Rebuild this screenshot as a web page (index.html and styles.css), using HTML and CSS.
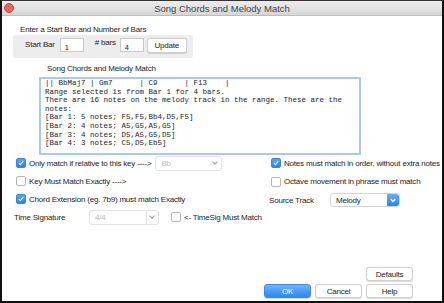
FILE: index.html
```html
<!DOCTYPE html>
<html lang="en">
<head>
    <meta charset="UTF-8">
    <title>Song Chords and Melody Match</title>
    <link rel="stylesheet" href="styles.css">
</head>
<body>

<div class="window">
    <!-- Title bar -->
    <div class="titlebar">
        <span class="close-dot"></span>
        <span class="title">Song Chords and Melody Match</span>
    </div>

    <div class="content">
        <!-- Start bar / number of bars -->
        <div class="bars-caption">Enter a Start Bar and Number of Bars</div>
        <div class="bars-group">
            <span class="lbl">Start Bar</span>
            <span class="field start-field">1</span>
            <span class="lbl bars-lbl"># bars</span>
            <span class="field bars-field">4</span>
            <button class="btn update-btn">Update</button>
        </div>

        <!-- Result memo -->
        <div class="memo-caption">Song Chords and Melody Match</div>
        <div class="memo">|| BbMaj7 | Gm7      | C9      | F13    |
Range selected is from Bar 1 for 4 bars.
There are 16 notes on the melody track in the range. These are the
notes:
[Bar 1: 5 notes; F5,F5,Bb4,D5,F5]
[Bar 2: 4 notes; A5,G5,A5,G5]
[Bar 3: 4 notes; D5,A5,G5,D5]
[Bar 4: 3 notes; C5,D5,Eb5]</div>

        <!-- Options -->
        <div class="options">
            <div class="col-left">
                <div class="row">
                    <span class="check on"><svg viewBox="0 0 10 10"><path d="M2.3 5.2 L4.2 7.2 L7.8 2.6" /></svg></span>
                    <span class="txt">Only match if relative to this key ----&gt;</span>
                    <span class="select disabled key-select"><span>Bb</span><i class="chev"></i></span>
                </div>
                <div class="row">
                    <span class="check"></span>
                    <span class="txt">Key Must Match Exactly ----&gt;</span>
                </div>
                <div class="row">
                    <span class="check on"><svg viewBox="0 0 10 10"><path d="M2.3 5.2 L4.2 7.2 L7.8 2.6" /></svg></span>
                    <span class="txt">Chord Extension (eg. 7b9) must match Exactly</span>
                </div>
                <div class="row">
                    <span class="txt time-lbl">Time Signature</span>
                    <span class="select disabled time-select"><span>4/4</span><i class="sep"></i><i class="chev"></i></span>
                    <span class="check"></span>
                    <span class="txt">&lt;- TimeSig Must Match</span>
                </div>
            </div>
            <div class="col-right">
                <div class="row indent">
                    <span class="check on"><svg viewBox="0 0 10 10"><path d="M2.3 5.2 L4.2 7.2 L7.8 2.6" /></svg></span>
                    <span class="txt">Notes must match in order, without extra notes</span>
                </div>
                <div class="row indent row-octave">
                    <span class="check"></span>
                    <span class="txt">Octave movement in phrase must match</span>
                </div>
                <div class="row">
                    <span class="txt source-lbl">Source Track</span>
                    <span class="select source-select"><span>Melody</span><i class="blue-btn"><svg viewBox="0 0 10 10"><path d="M3 4.2 L5 6.2 L7 4.2" /></svg></i></span>
                </div>
            </div>
        </div>

        <!-- Buttons -->
        <div class="footer">
            <div class="footer-row">
                <button class="btn">Defaults</button>
            </div>
            <div class="footer-row">
                <button class="btn ok-btn">OK</button>
                <button class="btn">Cancel</button>
                <button class="btn">Help</button>
            </div>
        </div>
    </div>
</div>

</body>
</html>
```

FILE: styles.css
```css
/* Общие */
html, body {
    margin: 0;
    padding: 0;
    background: #fff;
}

.window {
    width: 444px;
    height: 303px;
    box-sizing: border-box;
    border: 2px solid #111;
    border-top: 1px solid #333;
    font-family: "Liberation Sans", Arial, sans-serif;
    font-size: 8px;
    letter-spacing: -0.2px;
    color: #222;
    background: #fff;
    overflow: hidden;
    display: flex;
    flex-direction: column;
}

/* Заголовок окна */
.titlebar {
    position: relative;
    height: 14px;
    flex: none;
    background: linear-gradient(#ececec, #d6d6d6);
    border-bottom: 1px solid #bdbdbd;
    display: flex;
    align-items: center;
    justify-content: center;
}

.close-dot {
    position: absolute;
    left: 2px;
    top: 2px;
    width: 10px;
    height: 10px;
    border-radius: 50%;
    background: #f0605a;
    border: 0.5px solid #d8453f;
    box-sizing: border-box;
}

.title {
    font-size: 9.5px;
    letter-spacing: 0;
    color: #444;
}

.content {
    flex: 1;
    display: flex;
    flex-direction: column;
}

/* Начальный такт */
.bars-caption {
    margin: 9px 0 0 18px;
    line-height: 10px;
}

.bars-group {
    margin: 0 0 0 11px;
    width: 180px;
    height: 23px;
    box-sizing: border-box;
    background: #ededed;
    border-radius: 3px;
    display: flex;
    align-items: flex-start;
    padding: 3px 0 0 12px;
}

.lbl {
    line-height: 10px;
    margin-top: 2px;
}

.field {
    width: 24px;
    height: 14px;
    box-sizing: border-box;
    background: #fff;
    border: 1px solid #c8c8c8;
    padding: 4px 0 0 4px;
    font-size: 7.5px;
    line-height: 9px;
}

.start-field {
    margin-left: 5px;
}

.bars-lbl {
    margin-left: 11px;
    margin-top: 0;
}

.bars-field {
    margin-left: 4px;
}

.btn {
    height: 14px;
    width: 47px;
    padding: 0;
    font-family: "Liberation Sans", Arial, sans-serif;
    font-size: 8px;
    letter-spacing: -0.2px;
    color: #222;
    background: #fff;
    border: 1px solid #cfcfcf;
    border-radius: 3px;
    box-shadow: 0 0.5px 1px rgba(0,0,0,0.15);
}

.update-btn {
    width: 40px;
    height: 15px;
    margin-left: 3px;
}

/* Окно результата */
.memo-caption {
    margin: 6px 0 0 45px;
    line-height: 10px;
}

.memo {
    margin: 3px 0 0 37px;
    width: 322px;
    height: 78px;
    box-sizing: border-box;
    border: 2px solid #a9c9f0;
    border-radius: 1px;
    padding: 0 0 0 4px;
    font-family: "Liberation Mono", "Courier New", monospace;
    font-size: 7.5px;
    letter-spacing: 0;
    line-height: 8.6px;
    white-space: pre;
    color: #222;
}

/* Опции */
.options {
    display: flex;
    margin-top: -1px;
}

.col-left {
    width: 267px;
    padding-left: 14px;
    box-sizing: border-box;
    flex: none;
}

.row {
    display: flex;
    align-items: center;
    height: 18px;
    white-space: nowrap;
}

.row-octave {
    height: 19px;
}

.indent {
    margin-left: 2px;
}

.check {
    width: 10px;
    height: 10px;
    box-sizing: border-box;
    border: 1px solid #b4b4b4;
    border-radius: 2px;
    background: #fff;
    margin-right: 3px;
    flex: none;
    display: flex;
    align-items: center;
    justify-content: center;
}

.check.on {
    background: linear-gradient(#5aa6f8, #2b7ff0);
    border-color: #3a84e6;
}

.check svg {
    width: 8px;
    height: 8px;
}

.check path {
    fill: none;
    stroke: #fff;
    stroke-width: 1.4;
}

.select {
    display: flex;
    align-items: center;
    height: 15px;
    box-sizing: border-box;
    border: 1px solid #d4d4d4;
    border-radius: 3px;
    background: #fff;
    padding-left: 5px;
    flex: none;
}

.select > span {
    flex: 1;
}

.select.disabled {
    color: #b8b8b8;
    border-color: #e2e2e2;
}

.chev {
    width: 3px;
    height: 3px;
    border-right: 1px solid #999;
    border-bottom: 1px solid #999;
    transform: rotate(45deg);
    margin: 0 4px 2px 0;
}

.sep {
    width: 1px;
    height: 13px;
    background: #e2e2e2;
    margin-right: 3px;
}

.key-select {
    width: 67px;
    margin-left: 4px;
}

.time-lbl {
    margin-left: -2px;
    width: 75px;
}

.time-select {
    width: 70px;
    margin-right: 12px;
}

.source-lbl {
    width: 61px;
}

.source-select {
    width: 70px;
    height: 14px;
    padding-right: 0;
    overflow: hidden;
}

.blue-btn {
    width: 12px;
    height: 12px;
    background: linear-gradient(#63aef9, #2a7ff3);
    display: flex;
    border-radius: 0 2px 2px 0;
}

.blue-btn svg {
    width: 12px;
    height: 12px;
}

.blue-btn path {
    fill: none;
    stroke: #fff;
    stroke-width: 1.2;
}

/* Кнопки */
.footer {
    margin-top: auto;
    padding: 0 29px 3px 0;
    display: flex;
    flex-direction: column;
    align-items: flex-end;
    gap: 3px;
}

.footer-row {
    display: flex;
    gap: 4px;
}

.ok-btn {
    background: linear-gradient(#6db5fb, #2d86f5);
    border-color: #3c8ae8;
    color: #fff;
}
```
